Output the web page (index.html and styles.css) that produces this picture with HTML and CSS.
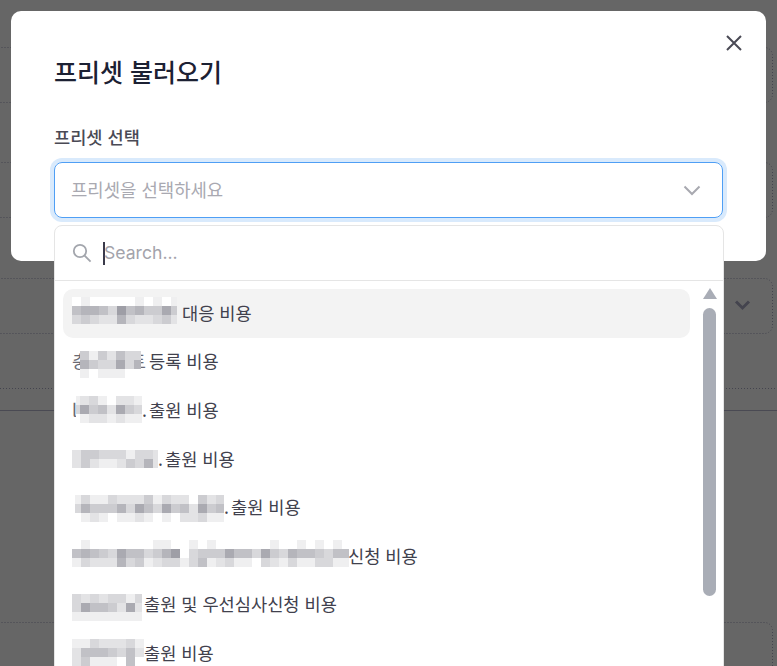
FILE: index.html
```html
<!DOCTYPE html>
<html lang="ko">
<head>
    <meta charset="UTF-8">
    <title>프리셋 불러오기</title>
    <link rel="stylesheet" href="styles.css">
</head>
<body>
<div class="page">
    <div class="field-box"><svg class="field-outline"><rect/></svg></div>
    <div class="field-box field-box-second"><svg class="field-outline"><rect/></svg></div>
    <div class="field-box field-box-third">
        <svg class="field-outline"><rect/></svg>
        <svg class="field-chevron" width="17" height="12" viewBox="0 0 17 12"><path d="M2 2.5l6.5 6.5 6.5-6.5"/></svg>
    </div>
    <div class="dotted-line"></div>
    <div class="solid-line"></div>
    <div class="field-box field-box-last"><svg class="field-outline"><rect/></svg></div>
</div>

<div class="overlay">
    <div class="modal">
        <button class="close-btn" type="button">
            <svg width="16" height="16" viewBox="0 0 16 16"><path d="M1 1l14 14M15 1L1 15"/></svg>
        </button>
        <h2 class="modal-title">프리셋 불러오기</h2>
        <div class="field-label">프리셋 선택</div>
        <div class="select-wrap">
            <div class="select-box">
                <span class="placeholder">프리셋을 선택하세요</span>
                <svg class="select-chevron" width="18" height="11" viewBox="0 0 18 11"><path d="M1.5 1.5L9 9l7.5-7.5"/></svg>
            </div>
            <div class="dropdown">
                <div class="search-row">
                    <svg class="search-icon" width="20" height="20" viewBox="0 0 20 20"><circle cx="8" cy="8" r="6.2"/><path d="M12.6 12.6l6 6"/></svg>
                    <span class="search-caret"></span>
                    <span class="search-text">Search...</span>
                </div>
                <div class="list">
                    <div class="options">
                        <div class="option option-active"><span class="mosaic"></span><span>대응 비용</span></div>
                        <div class="option"><span class="sliver sliver-start">충</span><span class="mosaic"></span><span class="sliver sliver-end">트</span><span>등록 비용</span></div>
                        <div class="option"><span class="sliver sliver-bar">l</span><span class="mosaic"></span><span class="dot">.</span><span>출원 비용</span></div>
                        <div class="option"><span class="mosaic"></span><span class="dot">.</span><span>출원 비용</span></div>
                        <div class="option"><span class="mosaic"></span><span class="dot">.</span><span>출원 비용</span></div>
                        <div class="option"><span class="mosaic"></span><span>신청 비용</span></div>
                        <div class="option"><span class="mosaic"></span><span>출원 및 우선심사신청 비용</span></div>
                        <div class="option"><span class="mosaic"></span><span>출원 비용</span></div>
                    </div>
                    <div class="scrollbar">
                        <span class="scroll-arrow"></span>
                        <span class="scroll-thumb"></span>
                    </div>
                </div>
            </div>
        </div>
    </div>
</div>
<script src="mosaic.js"></script>
</body>
</html>
```

FILE: styles.css
```css
*, ::before, ::after {
    box-sizing: border-box;
}

* {
    margin: 0;
}

html, body {
    height: 100%;
    overflow: hidden;
}

body {
    background: #fff;
    font-family: "Noto Sans CJK KR", "Noto Sans", sans-serif;
}

/* page behind the modal */
.page {
    padding-top: 47px;
}

.field-box {
    position: relative;
    height: 56px;
    margin: 0 4px 0 -10px;
}

.field-box-second {
    margin-top: 59px;
}

.field-box-third {
    margin-top: 60px;
}

.field-box-last {
    height: 90px;
    margin-top: 211px;
}

.field-outline {
    position: absolute;
    inset: 0;
    width: 100%;
    height: 100%;
}

.field-outline rect {
    x: .5px;
    y: .5px;
    width: calc(100% - 1px);
    height: calc(100% - 1px);
    rx: 8px;
    fill: none;
    stroke: #aaaac4;
    stroke-dasharray: 1 2;
}

.field-chevron {
    position: absolute;
    top: 21px;
    right: 22px;
    fill: none;
    stroke: #aaaac4;
    stroke-width: 3;
}

.dotted-line {
    height: 1px;
    margin-top: 54px;
    background: repeating-linear-gradient(90deg, #aaaac4 0 1px, transparent 1px 3px);
}

.solid-line {
    height: 1px;
    margin-top: 21px;
    background: #b8b8d0;
}

.overlay {
    position: fixed;
    inset: 0;
    background: rgba(0, 0, 0, .6);
}

.modal {
    position: absolute;
    top: 11px;
    left: 11px;
    width: 755px;
    height: 250px;
    padding: 42px 43px 0;
    background: #fff;
    border-radius: 10px;
}

.close-btn {
    position: absolute;
    top: 24px;
    right: 24px;
    display: flex;
    padding: 0;
    background: none;
    border: 0;
}

.close-btn svg {
    fill: none;
    stroke: #4a4a55;
    stroke-width: 2;
}

.modal-title {
    font-size: 25px;
    font-weight: 500;
    line-height: 36px;
    color: #1c2133;
}

.field-label {
    margin-top: 36px;
    font-size: 17.6px;
    font-weight: 500;
    line-height: 24px;
    color: #4a4a55;
}

.select-wrap {
    position: relative;
    width: 669px;
    margin-top: 13px;
}

.select-box {
    display: flex;
    align-items: center;
    justify-content: space-between;
    height: 56px;
    padding: 0 21px 0 16px;
    border: 1px solid #4f9ff5;
    border-radius: 8px;
    box-shadow: 0 0 0 4px #d9eafc;
}

.placeholder {
    padding-bottom: 2px;
    font-size: 17.8px;
    color: #a9a9b1;
}

.select-chevron {
    fill: none;
    stroke: #a8a9b0;
    stroke-width: 2;
}

.dropdown {
    position: absolute;
    top: 63px;
    left: 0;
    width: 670px;
    height: 560px;
    background: #fff;
    border: 1px solid #e5e5e5;
    border-radius: 8px;
}

.search-row {
    display: flex;
    align-items: center;
    height: 55px;
    padding-left: 17px;
    border-bottom: 1px solid #e5e5e5;
}

.search-icon {
    fill: none;
    stroke: #a3a6ad;
    stroke-width: 1.8;
}

.search-caret {
    width: 2px;
    height: 23px;
    margin-left: 11px;
    background: #3a3a4a;
}

.search-text {
    margin-left: -1px;
    padding-bottom: 2px;
    font-family: Inter, sans-serif;
    font-size: 17.6px;
    color: #a3a3ab;
}

.list {
    display: flex;
    padding: 8px 6px 0 8px;
}

.options {
    width: 628px;
}

.option {
    display: flex;
    align-items: center;
    height: 48.6px;
    padding: 0 0 2px 9px;
    font-size: 17.6px;
    color: #41414d;
    white-space: nowrap;
    border-radius: 10px;
}

.option-active {
    background: #f3f3f3;
}

/* sits on top of the name it hides */
.mosaic {
    position: relative;
    z-index: 1;
    display: block;
    flex: none;
    align-self: flex-start;
}

.mosaic svg {
    display: block;
}

.dot {
    flex: none;
    width: 3px;
    margin-right: 4px;
}

.sliver {
    flex: none;
    display: flex;
    color: #6a6a74;
}

.sliver-start {
    width: 8px;
}

.sliver-end {
    width: 5px;
    justify-content: flex-end;
    margin-right: 3px;
}

.sliver-bar {
    width: 4px;
}

.scrollbar {
    display: flex;
    flex-direction: column;
    align-items: center;
    width: 15px;
    margin-left: 12px;
}

.scroll-arrow {
    width: 0;
    height: 0;
    margin-top: -1px;
    border-right: 7.5px solid transparent;
    border-bottom: 11px solid #a9adb6;
    border-left: 7.5px solid transparent;
}

.scroll-thumb {
    width: 13px;
    height: 288px;
    margin-top: 9px;
    background: #a9adb6;
    border-radius: 7px;
}
```

FILE: mosaic.js
```js
const CELL = 9

// blurred parts of the preset names: shade 0 (white) to 9 (dark), one string per row
const MOSAICS = [
    { top: 8, left: 0, width: 105, gap: 5, skip: 0, rows: ['010000010101', '566538564474', '343226322342'] },
    { top: 13.4, left: 0, width: 61, gap: 0, skip: 0, rows: ['4142533', '6433736', '1011100'] },
    { top: 9.8, left: 0, width: 66, gap: 0, skip: 5, rows: ['12310221', '37452743', '01221211'] },
    { top: 15.2, left: 0, width: 86, gap: 0, skip: 0, rows: ['2443331332', '2421124362'] },
    { top: 11.6, left: 3, width: 149, gap: 0, skip: 3, rows: ['13113222413220423', '36444637537452745', '01210112101022311'] },
    { top: 8, left: 0, width: 277, gap: -1, skip: 0, rows: ['0100000001100101000000100101010', '5654375534680344475537436554355', '1322263412331351231103213113311'] },
    { top: 13.4, left: 0, width: 70, gap: 2, skip: 0, rows: ['32323313', '37554272', '11111111'] },
    { top: 9.8, left: 0, width: 72, gap: 0, skip: 0, rows: ['11322231', '25554352', '24111050'] },
]

const shadeColor = (shade) => {
    if (shade === 0) return '#fff'
    const grey = 250 - shade * 11.5
    return `rgb(${grey}, ${grey}, ${grey + shade})`
}

const drawMosaic = (node, { top, left, width, gap, skip, rows }) => {
    const cells = rows.map((row, y) => [...row].map((shade, x) =>
        `<rect x="${x * CELL}" y="${y * CELL}" width="${CELL}" height="${CELL}" fill="${shadeColor(Number(shade))}"/>`
    ).join('')).join('')

    node.style.marginTop = `${top}px`
    node.style.marginLeft = `${left}px`
    node.style.marginRight = `${gap}px`
    node.innerHTML = `<svg width="${width}" height="27" viewBox="${skip} 0 ${width} 27" shape-rendering="crispEdges">${cells}</svg>`
}

document.querySelectorAll('.mosaic').forEach((node, i) => drawMosaic(node, MOSAICS[i]))
```
